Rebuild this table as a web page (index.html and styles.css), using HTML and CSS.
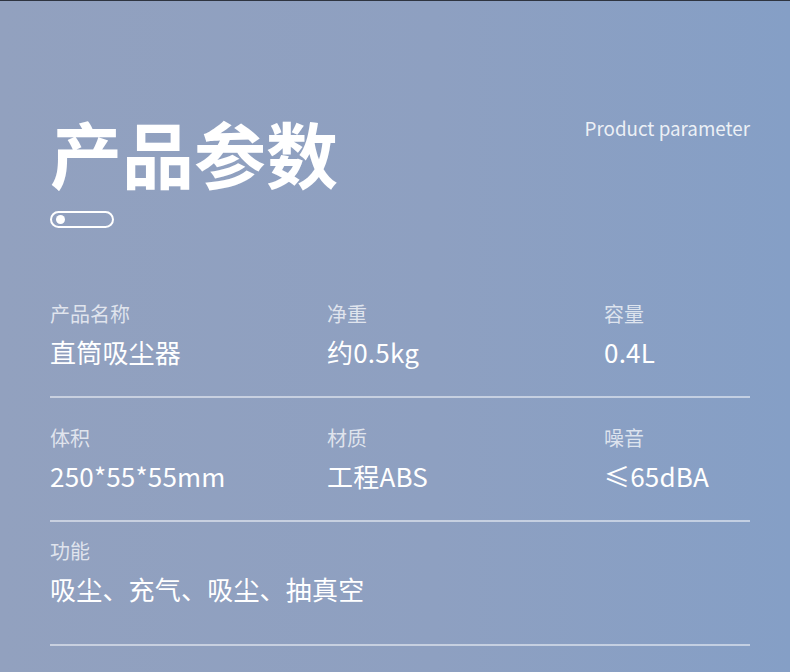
FILE: index.html
```html
<!DOCTYPE html>
<html lang="zh-CN">
<head>
  <meta charset="UTF-8">
  <meta name="viewport" content="width=device-width, initial-scale=1.0">
  <title>产品参数</title>
  <link rel="stylesheet" href="styles.css">
</head>
<body>
  <div class="page">
    <!-- Header -->
    <div class="header">
      <div class="title-block">
        <h1 class="title">产品参数</h1>
        <div class="pill"><span class="pill-dot"></span></div>
      </div>
      <div class="subtitle">Product parameter</div>
    </div>

    <!-- Spec table -->
    <div class="specs">
      <div class="spec-row">
        <div class="spec">
          <div class="spec-label">产品名称</div>
          <div class="spec-value">直筒吸尘器</div>
        </div>
        <div class="spec">
          <div class="spec-label">净重</div>
          <div class="spec-value">约0.5kg</div>
        </div>
        <div class="spec">
          <div class="spec-label">容量</div>
          <div class="spec-value">0.4L</div>
        </div>
      </div>
      <div class="spec-row">
        <div class="spec">
          <div class="spec-label">体积</div>
          <div class="spec-value">250*55*55mm</div>
        </div>
        <div class="spec">
          <div class="spec-label">材质</div>
          <div class="spec-value">工程ABS</div>
        </div>
        <div class="spec">
          <div class="spec-label">噪音</div>
          <div class="spec-value">≤65dBA</div>
        </div>
      </div>
      <div class="spec-row spec-row-last">
        <div class="spec spec-wide">
          <div class="spec-label">功能</div>
          <div class="spec-value">吸尘、充气、吸尘、抽真空</div>
        </div>
      </div>
    </div>
  </div>
</body>
</html>
```

FILE: styles.css
```css
html, body {
  margin: 0;
  padding: 0;
}
body {
  width: 790px;
  height: 672px;
  overflow: hidden;
  font-family: "Noto Sans CJK SC", "Noto Sans", sans-serif;
  color: #ffffff;
  background: linear-gradient(90deg, #92a1bf 0%, #8ea0c1 55%, #859fc6 100%);
  border-top: 1px solid #2e3440;
  box-sizing: border-box;
}
.page {
  padding: 0 40px 0 50px;
}

/* Header */
.header {
  display: flex;
  justify-content: space-between;
  align-items: flex-start;
  padding-top: 101px;
}
.title {
  margin: 0;
  font-size: 72px;
  font-weight: 700;
  line-height: 100px;
}
.pill {
  width: 56px;
  height: 13px;
  margin-top: 9px;
  border: 2px solid #ffffff;
  border-radius: 10px;
  display: flex;
  align-items: center;
  padding-left: 4px;
}
.pill-dot {
  width: 9px;
  height: 9px;
  border-radius: 50%;
  background: #ffffff;
}
.subtitle {
  margin-top: 14px;
  font-size: 18.8px;
  line-height: 24px;
  color: rgba(255, 255, 255, 0.85);
}

/* Specs */
.specs {
  margin-top: 73px;
}
.spec-row {
  display: grid;
  grid-template-columns: 277px 277px 1fr;
  padding-bottom: 27px;
  border-bottom: 2px solid rgba(255, 255, 255, 0.5);
  margin-bottom: 27px;
}
.spec-row:nth-child(2) {
  margin-bottom: 16px;
}
.spec-wide {
  grid-column: 1 / 4;
}
.spec-label {
  font-size: 20px;
  line-height: 26px;
  color: rgba(255, 255, 255, 0.72);
}
.spec-value {
  margin-top: 8px;
  font-size: 26px;
  line-height: 34px;
  letter-spacing: 0.2px;
}
.spec-row-last {
  padding-bottom: 38px;
}
```
